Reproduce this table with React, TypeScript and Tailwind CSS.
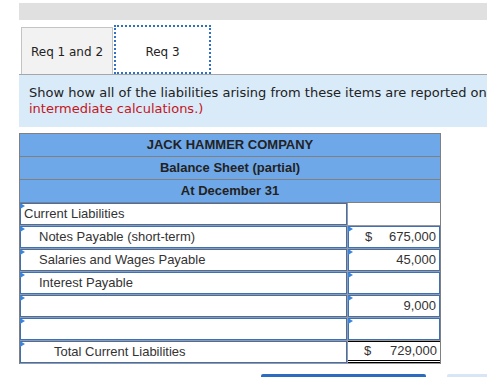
import React from 'react';

type Row = {
  label?: string;
  indent?: number;
  labelInput: boolean;
  amount?: string;
  dollar?: boolean;
  amountInput: boolean;
  total?: boolean;
};

const rows: Row[] = [
  { label: 'Current Liabilities', indent: 3, labelInput: true, amountInput: false },
  { label: 'Notes Payable (short-term)', indent: 18, labelInput: true, amount: '675,000', dollar: true, amountInput: true },
  { label: 'Salaries and Wages Payable', indent: 18, labelInput: true, amount: '45,000', amountInput: true },
  { label: 'Interest Payable', indent: 18, labelInput: true, amountInput: true },
  { labelInput: true, amount: '9,000', amountInput: true },
  { labelInput: true, amountInput: true },
  { label: 'Total Current Liabilities', indent: 33, labelInput: true, amount: '729,000', dollar: true, amountInput: false, total: true },
];

// little corner flag shown on editable cells
function Flag() {
  return (
    <span className="absolute left-0 top-0 h-0 w-0 border-y-[3px] border-l-[5px] border-y-transparent border-l-[#3d84d6]" />
  );
}

function Amount({ row }: { row: Row }) {
  return (
    <div className="flex h-full items-center justify-between pl-[16px] pr-[3px]">
      <span>{row.dollar ? '$' : ''}</span>
      <span>{row.amount ?? ''}</span>
    </div>
  );
}

export default function App() {
  return (
    <div className="h-[377px] w-[487px] overflow-hidden bg-white">
      <div className="w-[640px] pl-[19px] pt-[3px]">
        <div className="h-[17px] bg-[#e0e0e0]" />

        {/* tab strip */}
        <div className="mt-[5px] flex h-[50px] items-end border-b border-[#a6a6a6] pl-[2px] font-['DejaVu_Sans',Verdana,sans-serif] text-[12px] text-[#222]">
          <div className="flex h-[47px] w-[92px] items-center justify-center border border-b-0 border-[#c4c4c4] bg-[#f2f2f2] pt-[2px]">
            Req 1 and 2
          </div>
          <div className="ml-[1px] flex h-[49px] w-[97px] items-center justify-center border-2 border-dotted border-[#2f70c4] bg-white pt-[4px]">
            Req 3
          </div>
        </div>

        {/* instructions */}
        <div className="bg-[#d9eaf9] px-[10px] py-[10px] font-['DejaVu_Sans',Verdana,sans-serif] text-[13px] leading-[16px] text-[#222]">
          <p className="whitespace-nowrap">
            Show how all of the liabilities arising from these items are reported on the balance sheet. (Round your answers to the nearest dollar amount. Do not round
          </p>
          <p className="text-[#c4161c]">intermediate calculations.)</p>
        </div>

        {/* balance sheet */}
        <div className="mt-[6px] w-[422px] border border-b-0 border-[#808080] font-['Liberation_Sans',Arial,sans-serif] text-[13px] text-[#333]">
          {['JACK HAMMER COMPANY', 'Balance Sheet (partial)', 'At December 31'].map((t) => (
            <div
              key={t}
              className="flex h-[23px] items-center justify-center border-b border-[#808080] bg-[#6fa8e8] font-bold text-[#222]"
            >
              {t}
            </div>
          ))}

          {rows.map((row, i) => (
            <div key={i} className="flex h-[23px] border-b border-[#9a9a9a]">
              <div className="relative w-[328px] border-r border-[#9a9a9a]">
                <div className="flex h-full items-center border border-[#3f6fb5]" style={{ paddingLeft: row.indent ?? 0 }}>
                  {row.label}
                </div>
                {row.labelInput && <Flag />}
              </div>
              <div className="relative flex-1">
                {row.amountInput ? (
                  <>
                    <div className="h-full border border-[#3f6fb5]">
                      <Amount row={row} />
                    </div>
                    <Flag />
                  </>
                ) : row.total ? (
                  <div className="h-full border-t border-b-[3px] border-double border-black">
                    <Amount row={row} />
                  </div>
                ) : (
                  <Amount row={row} />
                )}
              </div>
            </div>
          ))}
        </div>

        {/* navigation buttons */}
        <div className="ml-[242px] mt-[10px] flex gap-[21px] font-['Liberation_Sans',Arial,sans-serif] text-[14px]">
          <button className="h-[36px] w-[165px] rounded-t-[2px] bg-[#2c6cbf] text-white">&lt; Req 1 and 2</button>
          <button className="h-[36px] w-[165px] rounded-t-[2px] bg-[#d8e5f6] text-[#2c6cbf]">Req 3 &gt;</button>
        </div>
      </div>
    </div>
  );
}
